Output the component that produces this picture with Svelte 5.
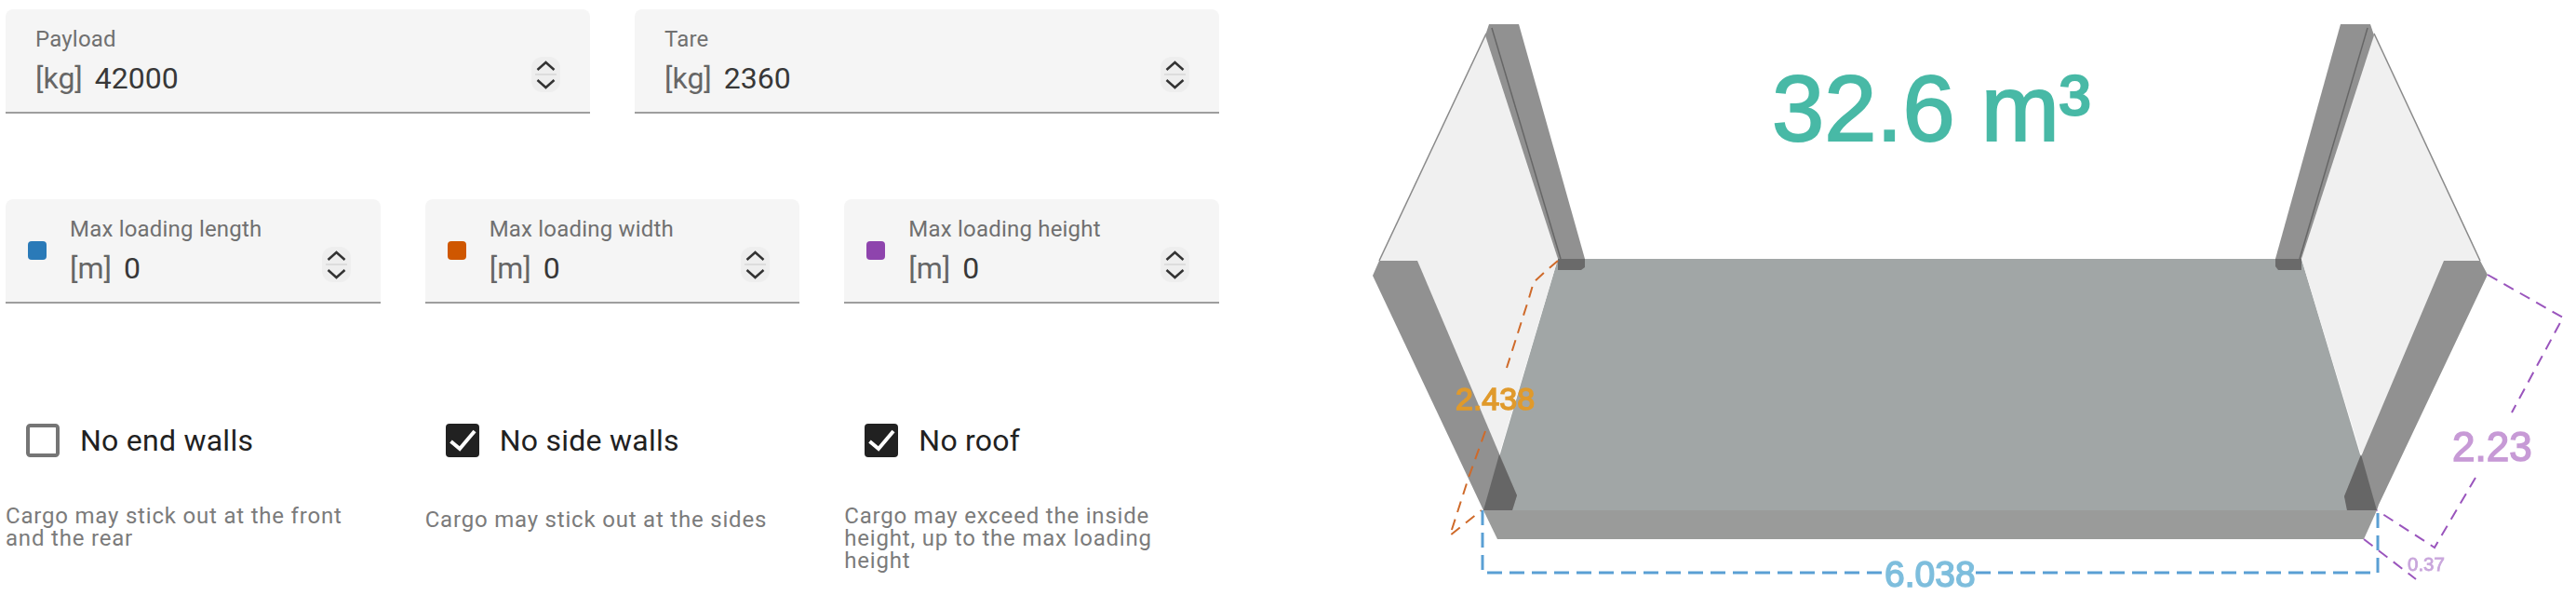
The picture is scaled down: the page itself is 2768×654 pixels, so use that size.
<script>
  const top = [
    { label: 'Payload', unit: '[kg]', value: '42000' },
    { label: 'Tare', unit: '[kg]', value: '2360' }
  ];
  const dims = [
    { label: 'Max loading length', color: '#2a7ab8' },
    { label: 'Max loading width', color: '#cf5700' },
    { label: 'Max loading height', color: '#8e44ad' }
  ];
  const opts = [
    { label: 'No end walls', on: false, hint: 'Cargo may stick out at the front and the rear' },
    { label: 'No side walls', on: true, hint: 'Cargo may stick out at the sides', shift: true },
    { label: 'No roof', on: true, hint: 'Cargo may exceed the inside height, up to the max loading height' }
  ];
</script>

{#snippet spin()}
  <svg class="spin" viewBox="0 0 31 38" aria-hidden="true">
    <rect width="31" height="38" rx="12" fill="#eeeeee" />
    <line x1="4" y1="19" x2="27" y2="19" stroke="#dcdcdc" stroke-width="2" />
    <polyline points="6.5,14 15.5,6 24.5,14" fill="none" stroke="#333" stroke-width="2.5" />
    <polyline points="6.5,25 15.5,33 24.5,25" fill="none" stroke="#333" stroke-width="2.5" />
  </svg>
{/snippet}

<div class="page">
  <div class="form">
    <div class="row two">
      {#each top as f}
        <div class="field">
          <div class="body">
            <div class="label">{f.label}</div>
            <div class="val"><span class="unit">{f.unit}</span><span class="num">{f.value}</span></div>
          </div>
          {@render spin()}
        </div>
      {/each}
    </div>

    <div class="row three dims">
      {#each dims as f}
        <div class="field">
          <span class="swatch" style="background:{f.color}"></span>
          <div class="body">
            <div class="label">{f.label}</div>
            <div class="val"><span class="unit">[m]</span><span class="num">0</span></div>
          </div>
          {@render spin()}
        </div>
      {/each}
    </div>

    <div class="row three opts">
      {#each opts as o}
        <div class="opt">
          <div class="check">
            {#if o.on}
              <svg class="box" viewBox="0 0 36 36" aria-hidden="true">
                <rect width="36" height="36" rx="4" fill="#212121" />
                <polyline points="5.5,19 15,27 31,8" fill="none" stroke="#fff" stroke-width="4" />
              </svg>
            {:else}
              <svg class="box" viewBox="0 0 36 36" aria-hidden="true">
                <rect x="2" y="2" width="32" height="32" rx="2.5" fill="#fff" stroke="#757575" stroke-width="4" />
              </svg>
            {/if}
            <span>{o.label}</span>
          </div>
          <p class="hint" class:shift={o.shift}>{o.hint}</p>
        </div>
      {/each}
    </div>
  </div>

  <svg class="scene" viewBox="1440 0 1328 654" aria-label="Container diagram">
    <!-- floor -->
    <polygon points="1674,278 2473,278 2554,548 1594,548" fill="#a1a6a6" />
    <polygon points="1594,548 2554,548 2540,579 1609,579" fill="#9a9b9a" />

    <!-- side panels -->
    <polygon points="1597,34 1482,280 1611,488 1674,278" fill="#f0f0f0" />
    <line x1="1597" y1="36" x2="1482" y2="280" stroke="#8a8a8a" stroke-width="1.5" />
    <polygon points="2551,34 2665,280 2537,488 2473,278" fill="#f0f0f0" />
    <line x1="2551" y1="36" x2="2665" y2="280" stroke="#8a8a8a" stroke-width="1.5" />

    <!-- upper posts -->
    <polygon points="1600,26 1632,26 1703,278 1674,278 1596,38" fill="#919191" />
    <line x1="1603" y1="30" x2="1677" y2="278" stroke="#666" stroke-width="1.5" />
    <polygon points="1674,278 1703,278 1703,287 1699,290 1674,290" fill="#6a6a6a" />
    <polygon points="2547,26 2515,26 2445,278 2473,278 2551,38" fill="#919191" />
    <line x1="2544" y1="30" x2="2471" y2="278" stroke="#666" stroke-width="1.5" />
    <polygon points="2473,278 2445,278 2445,286 2448,290 2473,290" fill="#6a6a6a" />

    <!-- lower bars -->
    <polygon points="1482,280 1523,280 1630,532 1625,548 1594,548 1475,296" fill="#919191" />
    <polygon points="1611,488 1630,532 1625,548 1594,548" fill="#666" />
    <polygon points="2626,280 2665,280 2673,295 2556,542 2554,548 2522,548 2519,533" fill="#919191" />
    <polygon points="2537,488 2519,533 2522,548 2554,548" fill="#666" />

    <!-- width dimension -->
    <polyline class="dash" points="1674,280 1659,293 1648,303 1643,320 1619,395" stroke="#cf6a2a" />
    <polyline class="dash" points="1596,463 1578,513 1558,575 1592,548" stroke="#cf6a2a" />
    <text class="dim" x="1564" y="440" font-size="34" fill="#e09a2c" stroke="#e09a2c">2.438</text>

    <!-- length dimension -->
    <polyline class="dash wide" points="1593,548 1593,615 2025,615" stroke="#5a9fd4" />
    <polyline class="dash wide" points="2123,615 2555,615 2555,548" stroke="#5a9fd4" />
    <text class="dim" x="2025" y="630" font-size="39" fill="#7ebedd" stroke="#7ebedd">6.038</text>

    <!-- height dimension -->
    <polyline class="dash" points="2673,295 2754,341 2699,443" stroke="#9a55bd" />
    <polyline class="dash" points="2660,513 2616,588 2554,548" stroke="#9a55bd" />
    <text class="dim" x="2635" y="495" font-size="44" fill="#c79ad6" stroke="#c79ad6">2.23</text>
    <polyline class="dash" points="2540,579 2596,622" stroke="#9a55bd" />
    <text class="dim small" x="2587" y="613" font-size="20.5" fill="#c9a6dc" stroke="#c9a6dc">0.37</text>

    <text class="volume" x="1904" y="151" font-size="101" fill="#48b9a6" stroke="#48b9a6">32.6 m³</text>
  </svg>
</div>

<style>
  :global(body) {
    margin: 0;
    background: #fff;
  }
  .page {
    width: 2768px;
    height: 654px;
    display: flex;
    justify-content: space-between;
    overflow: hidden;
    font-family: Roboto, sans-serif;
  }
  .form {
    width: 1304px;
    margin-left: 6px;
    padding-top: 10px;
  }
  .row {
    display: grid;
    column-gap: 48px;
  }
  .two {
    grid-template-columns: repeat(2, 628px);
  }
  .three {
    grid-template-columns: repeat(3, 402.67px);
  }
  .dims {
    margin-top: 92px;
  }
  .opts {
    margin-top: 129px;
  }
  .field {
    height: 112px;
    box-sizing: border-box;
    display: flex;
    align-items: center;
    padding: 0 32px;
    background: #f5f5f5;
    border-bottom: 2px solid #9e9e9e;
    border-radius: 8px 8px 0 0;
  }
  .swatch {
    flex: none;
    width: 20px;
    height: 20px;
    border-radius: 4px;
    margin: 0 25px 0 -8px;
  }
  .body {
    flex: 1;
    min-width: 0;
  }
  .label {
    font-size: 24px;
    line-height: 32px;
    color: #707070;
    letter-spacing: 0.2px;
  }
  .val {
    font-size: 32px;
    line-height: 40px;
    margin-top: 6px;
    display: flex;
  }
  .unit {
    color: #666;
    margin-right: 13px;
  }
  .num {
    color: #383838;
  }
  .spin {
    flex: none;
    width: 31px;
    height: 38px;
    margin-top: 29px;
  }
  .check {
    display: flex;
    align-items: center;
    gap: 22px;
    padding-left: 22px;
    height: 36px;
    font-size: 32px;
    letter-spacing: 0.25px;
    color: #212121;
  }
  .box {
    flex: none;
    width: 36px;
    height: 36px;
  }
  .hint {
    margin: 51px 0 0;
    font-size: 24px;
    line-height: 24px;
    letter-spacing: 0.8px;
    color: #7b7b7b;
  }
  .hint.shift {
    margin-top: 55px;
  }
  .scene {
    flex: none;
    width: 1328px;
    height: 654px;
    display: block;
  }
  .dash {
    fill: none;
    stroke-width: 2;
    stroke-dasharray: 12 8;
  }
  .dash.wide {
    stroke-width: 3;
    stroke-dasharray: 16 8;
  }
  .dim,
  .volume {
    font-family: "Liberation Sans", Arial, sans-serif;
  }
  .dim {
    stroke-width: 1.5;
    filter: blur(0.7px);
  }
  .dim.small {
    stroke-width: 0.8;
  }
  .volume {
    stroke-width: 2;
    filter: blur(0.6px);
  }
</style>
